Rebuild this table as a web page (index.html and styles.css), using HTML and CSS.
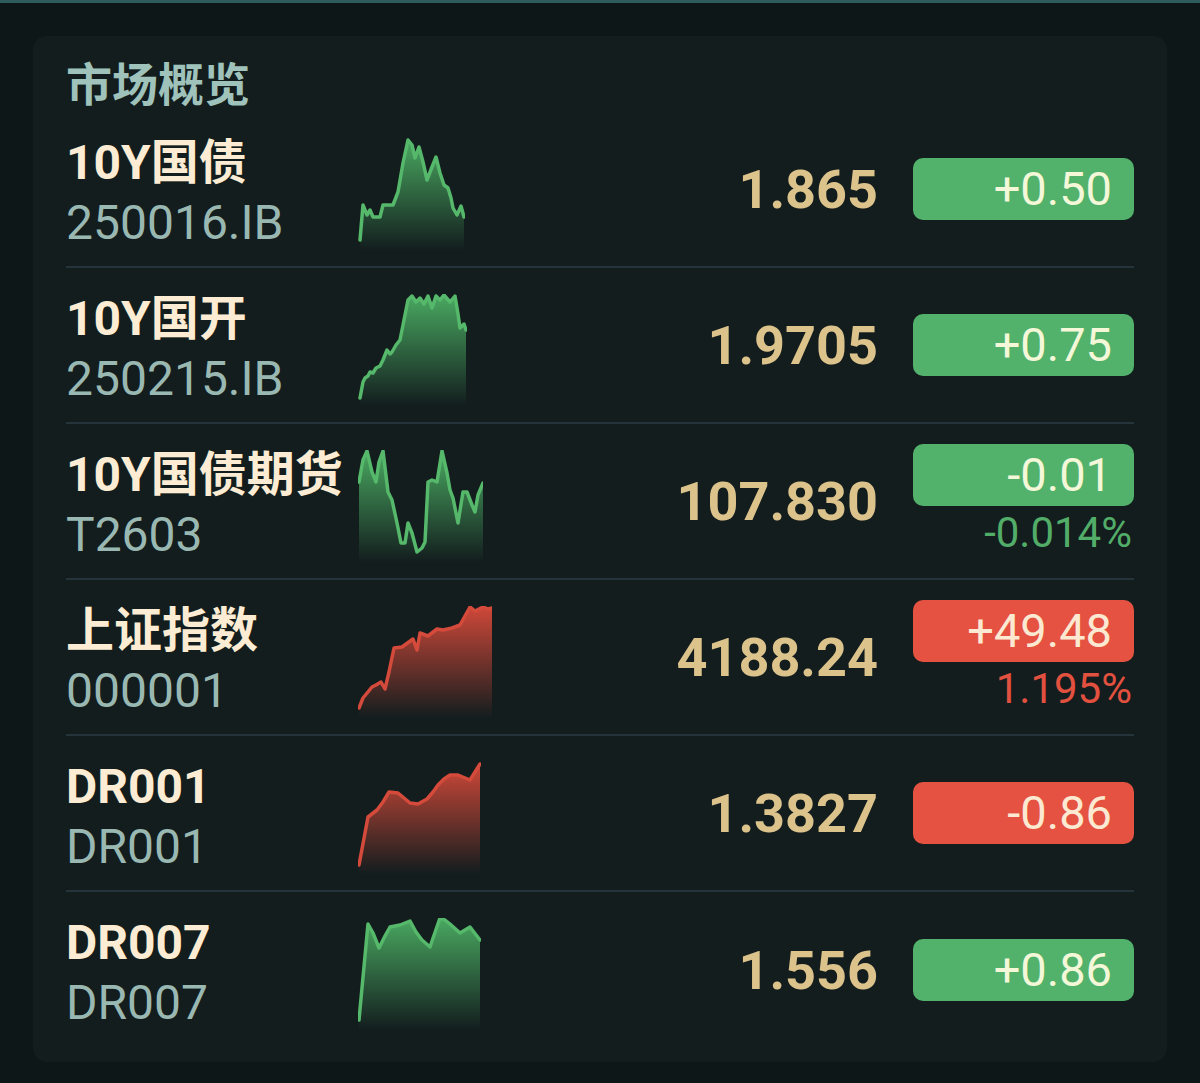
FILE: index.html
```html
<!DOCTYPE html>
<html lang="zh-CN">
<head>
  <meta charset="UTF-8">
  <meta name="viewport" content="width=device-width, initial-scale=1.0">
  <title>市场概览</title>
  <link rel="stylesheet" href="styles.css">
</head>
<body>

  <section class="panel">
    <h2 class="title">市场概览</h2>
    <div class="list"></div>
  </section>

  <script>
    const markets = [
      { name: '10Y国债', code: '250016.IB', price: '1.865', change: '+0.50', color: 'green', width: 107,
        points: [[2,102],[5,67],[9,77],[12,72],[15,79],[22,79],[25,67],[35,67],[40,54],[45,25],[50,2],[54,7],[57,20],[61,9],[65,24],[69,42],[74,29],[78,19],[82,35],[86,47],[90,50],[93,60],[95,70],[99,77],[103,68],[106,79]] },
      { name: '10Y国开', code: '250215.IB', price: '1.9705', change: '+0.75', color: 'green', width: 109,
        points: [[2,104],[5,88],[7,84],[10,82],[12,78],[15,79],[18,74],[22,72],[25,66],[29,56],[32,60],[34,58],[38,51],[42,46],[46,26],[50,6],[54,2],[58,8],[62,4],[66,10],[70,2],[74,14],[78,2],[82,6],[86,1],[92,8],[97,2],[100,20],[102,34],[106,30],[108,36]] },
      { name: '10Y国债期货', code: 'T2603', price: '107.830', change: '-0.01', sub: '-0.014%', color: 'green', width: 125,
        points: [[1,32],[5,10],[9,1],[14,22],[18,32],[21,12],[25,1],[30,42],[34,50],[39,73],[43,93],[47,93],[50,73],[54,83],[59,102],[64,98],[67,92],[70,32],[74,30],[79,32],[84,1],[89,23],[92,40],[95,48],[100,73],[105,42],[109,42],[114,55],[117,62],[120,45],[125,33]] },
      { name: '上证指数', code: '000001', price: '4188.24', change: '+49.48', sub: '1.195%', color: 'red', width: 134,
        points: [[1,102],[5,92],[14,81],[18,79],[23,76],[27,83],[31,66],[36,42],[44,41],[55,33],[59,44],[62,27],[70,30],[79,23],[85,24],[94,22],[102,19],[112,1],[117,5],[125,1],[130,3],[134,2]] },
      { name: 'DR001', code: 'DR001', price: '1.3827', change: '-0.86', color: 'red', width: 123,
        points: [[1,103],[10,55],[19,48],[25,40],[31,30],[40,31],[46,36],[52,41],[60,42],[69,37],[75,30],[80,23],[86,17],[92,13],[100,13],[112,18],[122,2]] },
      { name: 'DR007', code: 'DR007', price: '1.556', change: '+0.86', color: 'green', width: 123,
        points: [[1,102],[10,6],[15,15],[21,30],[27,18],[32,9],[42,7],[52,3],[58,14],[64,22],[72,29],[82,0],[87,2],[92,6],[102,15],[112,9],[122,22]] }
    ];

    const list = document.querySelector('.list');

    function sparkline(item, index) {
      const h = 112;
      const line = item.points.map(p => p.join(',')).join(' ');
      const first = item.points[0][0];
      const last = item.points[item.points.length - 1][0];
      const id = 'grad' + index;
      return `
        <svg class="spark spark-${item.color}" width="${item.width}" height="${h}" viewBox="0 0 ${item.width} ${h}">
          <defs>
            <linearGradient id="${id}" x1="0" y1="0" x2="0" y2="1">
              <stop offset="0" class="stop-top"/>
              <stop offset="1" class="stop-bottom"/>
            </linearGradient>
          </defs>
          <polygon points="${first},${h} ${line} ${last},${h}" fill="url(#${id})"/>
          <polyline points="${line}" class="spark-line"/>
        </svg>`;
    }

    markets.forEach((item, index) => {
      const row = document.createElement('div');
      row.className = 'row';
      row.innerHTML = `
        <div class="info">
          <div class="name">${item.name}</div>
          <div class="code">${item.code}</div>
        </div>
        ${sparkline(item, index)}
        <div class="price">${item.price}</div>
        <div class="quote">
          <div class="badge badge-${item.color}">${item.change}</div>
          ${item.sub ? `<div class="sub sub-${item.color}">${item.sub}</div>` : ''}
        </div>
      `;
      list.appendChild(row);
    });
  </script>
</body>
</html>
```

FILE: styles.css
```css
body {
  margin: 0;
  padding: 33px 33px 0;
  background-color: #0d1718;
  border-top: 3px solid #2e5c5d;
  font-family: Roboto, "Noto Sans CJK SC", sans-serif;
}

.panel {
  background-color: #131d1e;
  border-radius: 14px;
  padding: 22px 33px 14px;
}

.title {
  margin: 0;
  font-size: 46px;
  line-height: 54px;
  font-weight: 700;
  color: #9fc2bb;
}

.row {
  display: flex;
  align-items: center;
  height: 156px;
  box-sizing: border-box;
  border-bottom: 2px solid #25333a;
}

.row:last-child {
  border-bottom: none;
}

.info {
  width: 292px;
  flex-shrink: 0;
  align-self: flex-start;
  margin-top: 21px;
  font-size: 48px;
  line-height: 60px;
  white-space: nowrap;
}

.name {
  font-weight: 700;
  color: #fbecd3;
}

.code {
  color: #9ab8b2;
}

.spark {
  flex-shrink: 0;
  align-self: flex-start;
  margin-top: 26px;
}

.spark-line {
  fill: none;
  stroke-width: 3.5;
  stroke-linejoin: round;
  stroke-linecap: round;
}

.spark-green .spark-line {
  stroke: #55b86a;
}

.spark-green .stop-top {
  stop-color: #4cb064;
  stop-opacity: 0.95;
}

.spark-green .stop-bottom {
  stop-color: #4cb064;
  stop-opacity: 0;
}

.spark-red .spark-line {
  stroke: #d44a3b;
}

.spark-red .stop-top {
  stop-color: #d84a3a;
  stop-opacity: 0.95;
}

.spark-red .stop-bottom {
  stop-color: #d84a3a;
  stop-opacity: 0;
}

.price {
  flex: 1;
  text-align: right;
  font-size: 54px;
  font-weight: 700;
  color: #dcc38c;
}

.quote {
  width: 221px;
  flex-shrink: 0;
  margin-left: 35px;
  display: flex;
  flex-direction: column;
  align-items: flex-end;
}

.badge {
  width: 100%;
  box-sizing: border-box;
  height: 62px;
  line-height: 62px;
  padding-right: 22px;
  text-align: right;
  border-radius: 10px;
  font-size: 47px;
}

.badge-green {
  background-color: #52b26b;
  color: #f4f7d8;
}

.badge-red {
  background-color: #e65241;
  color: #fbe9d2;
}

.sub {
  margin-top: 2px;
  padding-right: 2px;
  font-size: 42px;
  line-height: 50px;
}

.sub-green {
  color: #52ad68;
}

.sub-red {
  color: #e2513f;
}
```
